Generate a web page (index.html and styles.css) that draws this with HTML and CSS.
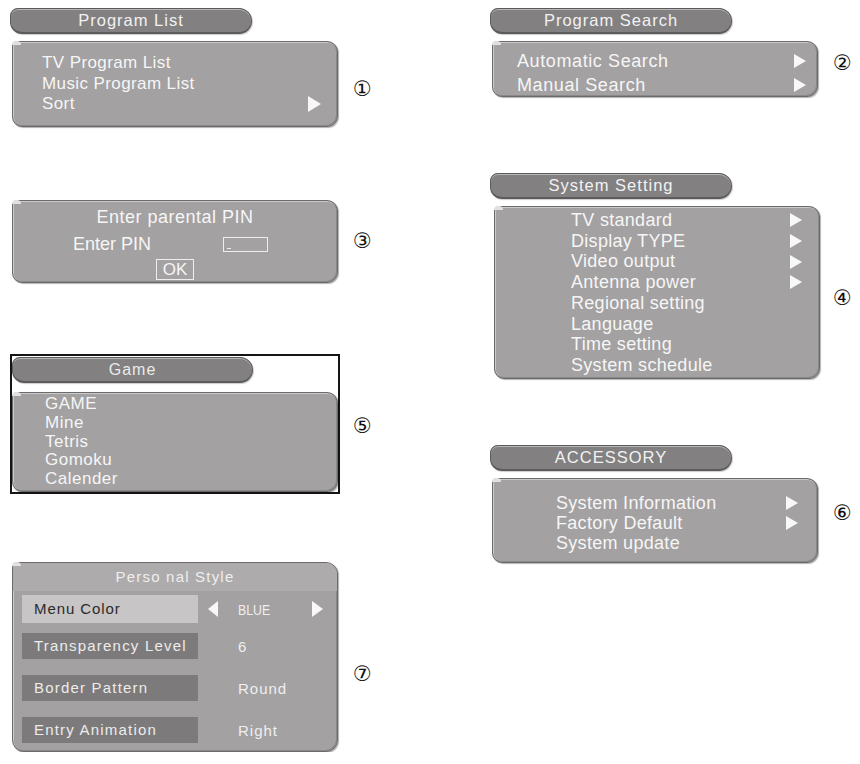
FILE: index.html
```html
<!DOCTYPE html>
<html lang="en">
<head>
    <meta charset="UTF-8">
    <title>Receiver menus</title>
    <link rel="stylesheet" href="styles.css">
</head>
<body>
<main class="sheet">
    <div class="col">
        <section class="item">
            <div class="menu">
                <div class="pill">Program List</div>
                <ul class="box box-program">
                    <li>TV Program List</li>
                    <li>Music Program List</li>
                    <li class="more">Sort</li>
                </ul>
            </div>
            <span class="num num-1">&#9312;</span>
        </section>

        <section class="item item-pin">
            <div class="menu">
                <div class="box box-pin">
                    <div class="pin-title">Enter parental PIN</div>
                    <div class="pin-row">
                        <span class="pin-label">Enter PIN</span>
                        <span class="pin-input"></span>
                    </div>
                    <div class="pin-ok">OK</div>
                </div>
            </div>
            <span class="num num-3">&#9314;</span>
        </section>

        <section class="item item-game">
            <div class="menu frame">
                <div class="pill pill-game">Game</div>
                <ul class="box box-game">
                    <li>GAME</li>
                    <li>Mine</li>
                    <li>Tetris</li>
                    <li>Gomoku</li>
                    <li>Calender</li>
                </ul>
            </div>
            <span class="num num-5">&#9316;</span>
        </section>

        <section class="item item-style">
            <div class="menu">
                <div class="box box-style">
                    <div class="style-title">Perso nal Style</div>
                    <div class="style-rows">
                        <div class="style-row current">
                            <span class="style-label active">Menu Color</span>
                            <span class="tri tri-left"></span>
                            <span class="style-value"><span class="narrow">BLUE</span></span>
                            <span class="tri"></span>
                        </div>
                        <div class="style-row">
                            <span class="style-label">Transparency Level</span>
                            <span></span>
                            <span class="style-value">6</span>
                        </div>
                        <div class="style-row">
                            <span class="style-label">Border Pattern</span>
                            <span></span>
                            <span class="style-value">Round</span>
                        </div>
                        <div class="style-row">
                            <span class="style-label">Entry Animation</span>
                            <span></span>
                            <span class="style-value">Right</span>
                        </div>
                    </div>
                </div>
            </div>
            <span class="num num-7">&#9318;</span>
        </section>
    </div>

    <div class="col">
        <section class="item">
            <div class="menu">
                <div class="pill">Program Search</div>
                <ul class="box box-search">
                    <li class="more">Automatic Search</li>
                    <li class="more">Manual Search</li>
                </ul>
            </div>
            <span class="num num-2">&#9313;</span>
        </section>

        <section class="item item-system">
            <div class="menu">
                <div class="pill">System Setting</div>
                <ul class="box box-system">
                    <li class="more">TV standard</li>
                    <li class="more">Display TYPE</li>
                    <li class="more">Video output</li>
                    <li class="more">Antenna power</li>
                    <li>Regional setting</li>
                    <li>Language</li>
                    <li>Time setting</li>
                    <li>System schedule</li>
                </ul>
            </div>
            <span class="num num-4">&#9315;</span>
        </section>

        <section class="item item-accessory">
            <div class="menu">
                <div class="pill">ACCESSORY</div>
                <ul class="box box-accessory">
                    <li class="more">System Information</li>
                    <li class="more">Factory Default</li>
                    <li>System update</li>
                </ul>
            </div>
            <span class="num num-6">&#9317;</span>
        </section>
    </div>
</main>
</body>
</html>
```

FILE: styles.css
```css
body {
    margin: 0;
    background-color: #fff;
    font-family: "Liberation Sans", Arial, sans-serif;
    color: #f6f6f6;
}
ul {
    margin: 0;
    padding: 0;
    list-style: none;
}
.sheet {
    display: grid;
    grid-template-columns: 480px 380px;
    padding: 8px 0 0 10px;
}
.col {
    display: flex;
    flex-direction: column;
}
.item {
    display: flex;
    align-items: flex-start;
    gap: 13px;
}
.item-pin { margin-top: 66px; }
.item-game { margin-top: 71px; }
.item-style { margin-top: 61px; }
.item-system { margin-top: 76px; }
.item-accessory { margin-top: 66px; }

.menu {
    width: 330px;
    flex: none;
}

/* callout numbers beside each menu */
.num {
    font-family: "DejaVu Sans", sans-serif;
    font-size: 21px;
    line-height: 20px;
    color: #111;
}
.num-1 { margin-top: 71px; }
.num-2 { margin-top: 45px; }
.num-3 { margin-top: 38px; }
.num-4 { margin-top: 115px; }
.num-5 { margin-top: 62px; }
.num-6 { margin-top: 58px; }
.num-7 { margin-top: 109px; }

/* title tab */
.pill {
    width: 242px;
    height: 26px;
    box-sizing: border-box;
    line-height: 23px;
    text-align: center;
    background-color: #828081;
    border: 1px solid #5c5a5b;
    border-bottom-width: 2px;
    border-radius: 8px 13px 13px 12px;
    box-shadow: inset 0 1px 0 #b8b6b7, 1px 1px 1px rgba(0, 0, 0, 0.2);
    font-size: 16.5px;
    letter-spacing: 1px;
    color: #f2f2f2;
}

/* menu body */
.box {
    position: relative;
    margin: 7px 0 0 2px;
    width: 326px;
    box-sizing: border-box;
    background-color: #a3a1a2;
    border: 1px solid #6c6a6b;
    border-radius: 5px 11px 11px 10px;
    box-shadow: inset 1px 1px 0 #cbc9ca, inset -1px -1px 0 #8a8889, 1px 1px 1px rgba(0, 0, 0, 0.3);
}
.box::before {
    content: "";
    position: absolute;
    left: -1px;
    top: -1px;
    width: 9px;
    height: 4px;
    border-radius: 4px 4px 0 0;
    background-color: #e2e0e1;
}
.box li {
    display: flex;
    align-items: center;
}
.box li.more::after {
    content: "";
    margin-left: auto;
    border-left: 12px solid #f8f8f8;
    border-top: 7px solid transparent;
    border-bottom: 7px solid transparent;
}

.box-program {
    height: 86px;
    padding: 11px 16px 0 29px;
    font-size: 17px;
    line-height: 20.5px;
    letter-spacing: 0.4px;
}
.box-program li.more::after {
    border-left-width: 13px;
    border-top-width: 8px;
    border-bottom-width: 8px;
}
.box-search {
    height: 56px;
    padding: 7px 11px 0 24px;
    font-size: 18px;
    line-height: 24px;
    letter-spacing: 0.6px;
}
.box-system {
    margin-left: 4px;
    height: 173px;
    padding: 3px 17px 0 76px;
    font-size: 18px;
    line-height: 20.7px;
    letter-spacing: 0.3px;
}
.box-accessory {
    height: 85px;
    padding: 14px 19px 0 63px;
    font-size: 18px;
    line-height: 20px;
    letter-spacing: 0.3px;
}

/* boxed game menu */
.frame {
    box-sizing: border-box;
    border: 2px solid #151515;
    padding-top: 1px;
}
.pill-game {
    width: 241px;
    font-size: 16px;
    color: #ebebeb;
}
.box-game {
    margin: 9px 0 0 0;
    height: 100px;
    padding: 2px 0 0 32px;
    font-size: 17px;
    line-height: 18.8px;
    letter-spacing: 0.5px;
}

/* parental pin dialog */
.box-pin {
    height: 83px;
    padding-top: 5px;
    font-size: 18px;
}
.pin-title {
    line-height: 22px;
    text-align: center;
    letter-spacing: 0.5px;
}
.pin-row {
    display: flex;
    align-items: center;
    height: 20px;
    margin-top: 6px;
    padding-left: 60px;
}
.pin-label {
    width: 150px;
}
.pin-input {
    position: relative;
    width: 45px;
    height: 15px;
    box-sizing: border-box;
    border: 1px solid #eee;
}
.pin-input::after {
    content: "";
    position: absolute;
    left: 3px;
    bottom: 2px;
    width: 4px;
    height: 1px;
    background-color: #eee;
}
.pin-ok {
    width: 38px;
    height: 21px;
    box-sizing: border-box;
    margin: 5px auto 0;
    border: 1px solid #eee;
    line-height: 19px;
    text-align: center;
    font-size: 17px;
}

/* personal style settings */
.box-style {
    height: 190px;
    border-radius: 6px 12px 12px 12px;
}
.style-title {
    height: 28px;
    line-height: 28px;
    text-align: center;
    background-color: #adabac;
    border-radius: 5px 11px 0 0;
    font-size: 15px;
    letter-spacing: 1.2px;
    color: #efefef;
}
.style-rows {
    display: grid;
    row-gap: 16px;
    padding: 4px 0 0 9px;
}
.style-row {
    display: grid;
    grid-template-columns: 176px 40px 74px 12px;
    align-items: center;
    height: 26px;
}
.style-row.current {
    height: 28px;
    margin-bottom: -6px;
}
.style-label {
    height: 100%;
    line-height: 26px;
    padding-left: 12px;
    background-color: #7c7a7b;
    font-size: 15px;
    letter-spacing: 1.2px;
    color: #ececec;
}
.style-label.active {
    line-height: 28px;
    background-color: #c7c5c6;
    color: #2b2b2b;
    letter-spacing: 0.9px;
}
.style-value {
    font-size: 15px;
    letter-spacing: 1px;
    color: #efefef;
}
.narrow {
    display: inline-block;
    transform: scaleX(0.82);
    transform-origin: left center;
    letter-spacing: 0;
}
.tri {
    width: 0;
    height: 0;
    border-left: 11px solid #f8f8f8;
    border-top: 8px solid transparent;
    border-bottom: 8px solid transparent;
}
.tri-left {
    margin-left: 10px;
    border-left: 0;
    border-right: 10px solid #f8f8f8;
}
```
